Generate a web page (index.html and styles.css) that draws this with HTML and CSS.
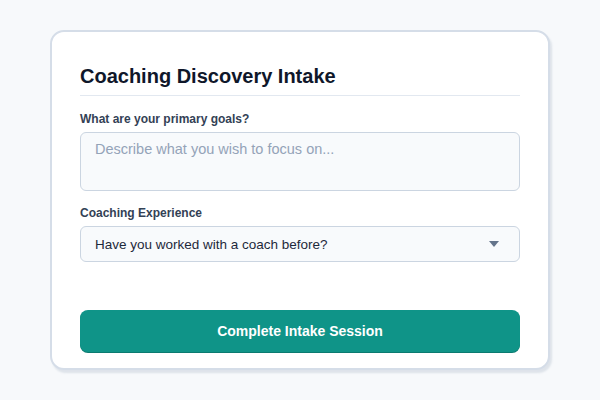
FILE: index.html
```html
<!DOCTYPE html>
<html lang="en">
<head>
    <meta charset="UTF-8">
    <meta name="viewport" content="width=device-width, initial-scale=1.0">
    <title>Coaching Discovery Intake</title>
    <link rel="stylesheet" href="styles.css">
</head>
<body>
    <div class="card">
        <h1 class="title">Coaching Discovery Intake</h1>

        <div class="field">
            <label class="field-label" for="goals">What are your primary goals?</label>
            <textarea id="goals" class="text-area" placeholder="Describe what you wish to focus on..."></textarea>
        </div>

        <div class="field">
            <label class="field-label" for="experience">Coaching Experience</label>
            <div class="select-wrap">
                <select id="experience" class="select-box">
                    <option>Have you worked with a coach before?</option>
                    <option>Yes, I have</option>
                    <option>No, this is my first time</option>
                </select>
                <span class="select-arrow"></span>
            </div>
        </div>

        <button class="submit-button">Complete Intake Session</button>
    </div>
</body>
</html>
```

FILE: styles.css
```css
* {
    box-sizing: border-box;
    margin: 0;
    padding: 0;
    font-family: 'Liberation Sans', Arial, sans-serif;
}

body {
    background: #f7f9fb;
    min-height: 100vh;
    padding: 30px 50px;
}

.card {
    background: white;
    width: 500px;
    border: 2px solid #d5dde8;
    border-radius: 14px;
    box-shadow: 2px 3px 2px rgba(148, 163, 184, 0.25);
    padding: 30px 28px 16px;
    display: flex;
    flex-direction: column;
}

.title {
    font-size: 20px;
    line-height: 23px;
    font-weight: 700;
    color: #0f172a;
    padding: 3px 0 7px;
    border-bottom: 1px solid #e2e8f0;
    margin-bottom: 16px;
}

.field {
    display: flex;
    flex-direction: column;
    margin-bottom: 15px;
}

.field-label {
    font-size: 12px;
    line-height: 14px;
    font-weight: 700;
    color: #334155;
    margin-bottom: 6px;
}

.text-area {
    height: 59px;
    resize: none;
    background: #f8fafc;
    border: 1px solid #cbd5e1;
    border-radius: 6px;
    padding: 8px 14px;
    font-size: 14.5px;
    color: #1e293b;
}

.text-area::placeholder {
    color: #94a3b8;
}

.select-wrap {
    position: relative;
}

.select-box {
    width: 100%;
    height: 36px;
    appearance: none;
    background: #f8fafc;
    border: 1px solid #cbd5e1;
    border-radius: 6px;
    padding: 0 14px;
    font-size: 13.5px;
    color: #1e293b;
}

.select-arrow {
    position: absolute;
    right: 21px;
    top: 15px;
    border-left: 5px solid transparent;
    border-right: 5px solid transparent;
    border-top: 6px solid #64748b;
    pointer-events: none;
}

.submit-button {
    margin-top: 33px;
    height: 42px;
    background: #0f9488;
    color: white;
    border: none;
    border-radius: 8px;
    box-shadow: 0 1px 0 #0b7a70;
    font-size: 14px;
    font-weight: 700;
    cursor: pointer;
}
```
